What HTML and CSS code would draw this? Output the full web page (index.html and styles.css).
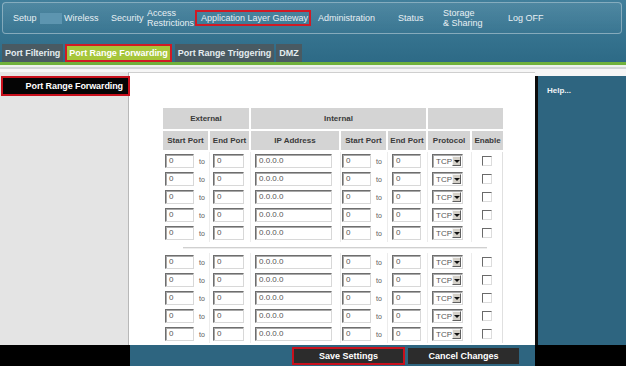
FILE: index.html
```html
<!DOCTYPE html>
<html lang="en">
<head>
    <meta charset="UTF-8">
    <title>Port Range Forwarding</title>
    <link rel="stylesheet" href="styles.css">
</head>
<body>

<header class="topbar">
    <nav class="nav">
        <a>Setup</a>
        <span class="blank"></span>
        <a>Wireless</a>
        <a>Security</a>
        <a class="two">Access<br>Restrictions</a>
        <a class="marked">Application Layer Gateway</a>
        <a>Administration</a>
        <a>Status</a>
        <a class="two">Storage<br>&amp; Sharing</a>
        <a>Log OFF</a>
    </nav>
    <div class="tabs">
        <a class="tab">Port Filtering</a>
        <a class="tab active">Port Range Forwarding</a>
        <a class="tab">Port Range Triggering</a>
        <a class="tab">DMZ</a>
    </div>
</header>
<div class="green-line"></div>
<div class="strip"></div>

<div class="page">
    <aside class="sidebar">
        <div class="side-label">Port Range Forwarding</div>
    </aside>

    <main class="content">
        <table class="fwd">
            <colgroup>
                <col class="c1"><col class="c2"><col class="c3"><col class="c4"><col class="c5"><col class="c6"><col class="c7">
            </colgroup>
            <thead>
                <tr class="h1">
                    <th colspan="2">External</th>
                    <th colspan="3">Internal</th>
                    <th colspan="2"></th>
                </tr>
                <tr class="h2">
                    <th>Start Port</th>
                    <th>End Port</th>
                    <th>IP Address</th>
                    <th>Start Port</th>
                    <th>End Port</th>
                    <th>Protocol</th>
                    <th>Enable</th>
                </tr>
            </thead>
            <tbody>
                <tr>
                    <td class="pl2"><span class="inp port">0</span><span class="to">to</span></td>
                    <td><span class="inp port2">0</span></td>
                    <td class="pl4"><span class="inp ip">0.0.0.0</span></td>
                    <td class="pl1"><span class="inp port">0</span><span class="to">to</span></td>
                    <td class="pl4"><span class="inp port">0</span></td>
                    <td class="pl4"><span class="sel">TCP<i class="arrow"></i></span></td>
                    <td class="center"><span class="chk"></span></td>
                </tr>
                <tr>
                    <td class="pl2"><span class="inp port">0</span><span class="to">to</span></td>
                    <td><span class="inp port2">0</span></td>
                    <td class="pl4"><span class="inp ip">0.0.0.0</span></td>
                    <td class="pl1"><span class="inp port">0</span><span class="to">to</span></td>
                    <td class="pl4"><span class="inp port">0</span></td>
                    <td class="pl4"><span class="sel">TCP<i class="arrow"></i></span></td>
                    <td class="center"><span class="chk"></span></td>
                </tr>
                <tr>
                    <td class="pl2"><span class="inp port">0</span><span class="to">to</span></td>
                    <td><span class="inp port2">0</span></td>
                    <td class="pl4"><span class="inp ip">0.0.0.0</span></td>
                    <td class="pl1"><span class="inp port">0</span><span class="to">to</span></td>
                    <td class="pl4"><span class="inp port">0</span></td>
                    <td class="pl4"><span class="sel">TCP<i class="arrow"></i></span></td>
                    <td class="center"><span class="chk"></span></td>
                </tr>
                <tr>
                    <td class="pl2"><span class="inp port">0</span><span class="to">to</span></td>
                    <td><span class="inp port2">0</span></td>
                    <td class="pl4"><span class="inp ip">0.0.0.0</span></td>
                    <td class="pl1"><span class="inp port">0</span><span class="to">to</span></td>
                    <td class="pl4"><span class="inp port">0</span></td>
                    <td class="pl4"><span class="sel">TCP<i class="arrow"></i></span></td>
                    <td class="center"><span class="chk"></span></td>
                </tr>
                <tr>
                    <td class="pl2"><span class="inp port">0</span><span class="to">to</span></td>
                    <td><span class="inp port2">0</span></td>
                    <td class="pl4"><span class="inp ip">0.0.0.0</span></td>
                    <td class="pl1"><span class="inp port">0</span><span class="to">to</span></td>
                    <td class="pl4"><span class="inp port">0</span></td>
                    <td class="pl4"><span class="sel">TCP<i class="arrow"></i></span></td>
                    <td class="center"><span class="chk"></span></td>
                </tr>
                <tr class="sep">
                    <td colspan="7"><div class="sep-line"></div></td>
                </tr>
                <tr>
                    <td class="pl2"><span class="inp port">0</span><span class="to">to</span></td>
                    <td><span class="inp port2">0</span></td>
                    <td class="pl4"><span class="inp ip">0.0.0.0</span></td>
                    <td class="pl1"><span class="inp port">0</span><span class="to">to</span></td>
                    <td class="pl4"><span class="inp port">0</span></td>
                    <td class="pl4"><span class="sel">TCP<i class="arrow"></i></span></td>
                    <td class="center"><span class="chk"></span></td>
                </tr>
                <tr>
                    <td class="pl2"><span class="inp port">0</span><span class="to">to</span></td>
                    <td><span class="inp port2">0</span></td>
                    <td class="pl4"><span class="inp ip">0.0.0.0</span></td>
                    <td class="pl1"><span class="inp port">0</span><span class="to">to</span></td>
                    <td class="pl4"><span class="inp port">0</span></td>
                    <td class="pl4"><span class="sel">TCP<i class="arrow"></i></span></td>
                    <td class="center"><span class="chk"></span></td>
                </tr>
                <tr>
                    <td class="pl2"><span class="inp port">0</span><span class="to">to</span></td>
                    <td><span class="inp port2">0</span></td>
                    <td class="pl4"><span class="inp ip">0.0.0.0</span></td>
                    <td class="pl1"><span class="inp port">0</span><span class="to">to</span></td>
                    <td class="pl4"><span class="inp port">0</span></td>
                    <td class="pl4"><span class="sel">TCP<i class="arrow"></i></span></td>
                    <td class="center"><span class="chk"></span></td>
                </tr>
                <tr>
                    <td class="pl2"><span class="inp port">0</span><span class="to">to</span></td>
                    <td><span class="inp port2">0</span></td>
                    <td class="pl4"><span class="inp ip">0.0.0.0</span></td>
                    <td class="pl1"><span class="inp port">0</span><span class="to">to</span></td>
                    <td class="pl4"><span class="inp port">0</span></td>
                    <td class="pl4"><span class="sel">TCP<i class="arrow"></i></span></td>
                    <td class="center"><span class="chk"></span></td>
                </tr>
                <tr>
                    <td class="pl2"><span class="inp port">0</span><span class="to">to</span></td>
                    <td><span class="inp port2">0</span></td>
                    <td class="pl4"><span class="inp ip">0.0.0.0</span></td>
                    <td class="pl1"><span class="inp port">0</span><span class="to">to</span></td>
                    <td class="pl4"><span class="inp port">0</span></td>
                    <td class="pl4"><span class="sel">TCP<i class="arrow"></i></span></td>
                    <td class="center"><span class="chk"></span></td>
                </tr>
            </tbody>
        </table>
    </main>

    <aside class="help">
        <p>Help...</p>
    </aside>
</div>

<footer class="footer">
    <div class="foot-left"></div>
    <div class="foot-main">
        <button class="btn marked-btn">Save Settings</button>
        <button class="btn">Cancel Changes</button>
    </div>
    <div class="foot-right"></div>
</footer>

</body>
</html>
```

FILE: styles.css
```css
* {
    box-sizing: border-box;
}

body {
    margin: 0;
    width: 626px;
    height: 366px;
    overflow: hidden;
    background-color: #000;
    font-family: "Liberation Sans", Arial, sans-serif;
}

/* top navigation */
.topbar {
    height: 62px;
    background: linear-gradient(#417f9b, #2d6a86);
    padding-top: 2px;
}

.nav {
    height: 32px;
    margin: 0 4px 0 2px;
    border: 1px solid rgba(255, 255, 255, 0.35);
    border-radius: 4px;
    background: linear-gradient(rgba(255, 255, 255, 0.08), rgba(255, 255, 255, 0.02));
    padding-left: 10px;
    display: grid;
    grid-template-columns: 27px 24px 47px 36px 50px 121px 80px 45px 65px auto;
    align-items: center;
    font-size: 9px;
    color: #e8f0f4;
}

.nav a {
    white-space: nowrap;
}

.nav .two {
    line-height: 10px;
}

.nav .blank {
    width: 22px;
    height: 11px;
    background-color: #5d95b0;
}

.nav .marked {
    width: 116px;
    height: 16px;
    margin-left: -2px;
    border: 2px solid #d11a24;
    line-height: 12px;
    padding-left: 4px;
}

.tabs {
    display: flex;
    gap: 2px;
    margin: 10px 0 0 2px;
    height: 18px;
}

.tab {
    height: 18px;
    line-height: 18px;
    padding: 0 3px;
    background-color: #495a62;
    color: #e4ecef;
    font-size: 9px;
    font-weight: bold;
    letter-spacing: -0.05px;
    white-space: nowrap;
}

.tab.active {
    background-color: #a6c63a;
    color: #fff;
    border: 2px solid #d11a24;
    line-height: 14px;
    padding: 0 2px;
    margin-right: 1px;
}

.green-line {
    height: 3px;
    background-color: #70b23c;
}

.strip {
    height: 7px;
    background: linear-gradient(#eef2ee 0, #eef2ee 2px, #d2d6d6 2px, #d2d6d6 4px, #f6f6f6 4px);
}

/* main area */
.page {
    display: flex;
    height: 273px;
    background-color: #f6f6f6;
}

.sidebar {
    width: 128px;
    background-color: #e4e4e4;
    padding-top: 4px;
}

.side-label {
    position: relative;
    width: 129px;
    height: 20px;
    margin-left: 1px;
    background-color: #050505;
    border: 2px solid #c8101c;
    color: #fff;
    font-size: 9px;
    font-weight: bold;
    letter-spacing: -0.1px;
    text-align: right;
    line-height: 16px;
    padding-right: 5px;
}

.content {
    width: 407px;
    background-color: #fff;
    border-left: 1px solid #b8b8b8;
    border-top: 1px solid #cfcfcf;
    padding: 35px 0 0 34px;
}

.help {
    width: 91px;
    margin-top: 4px;
    background-color: #2e6580;
    border-left: 3px solid #0c0c0c;
    padding: 10px 0 0 9px;
}

.help p {
    margin: 0;
    color: #f0f4f6;
    font-size: 8px;
    font-weight: bold;
}

/* forwarding table */
.fwd {
    width: 340px;
    table-layout: fixed;
    border-collapse: separate;
    border-spacing: 0;
    font-size: 8px;
    color: #3a3a3a;
}

.c1 { width: 47px; }
.c2 { width: 41px; }
.c3 { width: 90px; }
.c4 { width: 47px; }
.c5 { width: 40px; }
.c6 { width: 44px; }
.c7 { width: 31px; }

.fwd th {
    background-color: #d4d4d4;
    border-right: 2px solid #fff;
    border-bottom: 2px solid #fff;
    font-weight: bold;
    padding: 0;
    white-space: nowrap;
}

.fwd th:last-child {
    border-right: none;
}

.h1 th {
    height: 23px;
}

.h2 th {
    height: 21px;
}

.fwd td {
    height: 18px;
    padding: 0 0 0 3px;
    border-right: 1px solid #ececec;
    white-space: nowrap;
    vertical-align: middle;
}

.fwd td:last-child {
    border-right: 1px solid #e0e0e0;
}

.fwd td.pl1 { padding-left: 1px; }
.fwd td.pl2 { padding-left: 2px; }
.fwd td.pl4 { padding-left: 4px; }
.fwd td.center { padding-left: 0; text-align: center; }

.fwd .sep td {
    height: 11px;
    padding: 0;
}

.sep-line {
    margin: 0 15px 0 20px;
    border-top: 1px solid #d0d0d0;
    border-bottom: 1px solid #eeeeee;
}

.inp {
    display: inline-block;
    vertical-align: middle;
    height: 14px;
    border: 1px solid;
    border-color: #6e6e6e #d8d8d8 #d8d8d8 #6e6e6e;
    box-shadow: inset 1px 1px 0 #a8a8a8;
    padding-left: 3px;
    line-height: 12px;
    color: #555;
    font-size: 8px;
    background-color: #fff;
}

.port { width: 29px; }
.port2 { width: 31px; }
.ip { width: 77px; }

.to {
    display: inline-block;
    vertical-align: middle;
    margin-left: 5px;
    font-size: 7px;
    color: #5a5a5a;
}

.sel {
    display: inline-flex;
    align-items: center;
    justify-content: space-between;
    vertical-align: middle;
    width: 31px;
    height: 14px;
    border: 1px solid;
    border-color: #6e6e6e #d8d8d8 #d8d8d8 #6e6e6e;
    box-shadow: inset 1px 1px 0 #a8a8a8;
    padding: 0 1px 0 3px;
    font-size: 8px;
    color: #555;
    background-color: #fff;
}

.arrow {
    position: relative;
    width: 10px;
    height: 10px;
    background-color: #d4d0c8;
    border: 1px solid;
    border-color: #f4f4f4 #606060 #606060 #f4f4f4;
}

.arrow::after {
    content: "";
    position: absolute;
    left: 1px;
    top: 3px;
    border-left: 3px solid transparent;
    border-right: 3px solid transparent;
    border-top: 3px solid #111;
}

.chk {
    display: inline-block;
    vertical-align: middle;
    width: 10px;
    height: 10px;
    margin-left: -1px;
    border: 1px solid;
    border-color: #6a6a6a #dcdcdc #dcdcdc #6a6a6a;
    background-color: #fff;
}

/* footer buttons */
.footer {
    display: flex;
    height: 21px;
}

.foot-left {
    width: 130px;
    background-color: #000;
}

.foot-main {
    width: 405px;
    background-color: #2e6580;
    display: flex;
    align-items: flex-start;
    gap: 3px;
    padding: 3px 0 0 162px;
}

.foot-right {
    width: 91px;
    background-color: #000;
}

.btn {
    width: 111px;
    height: 16px;
    padding: 0;
    border: none;
    background-color: #2c2c2c;
    color: #fff;
    font-family: "Liberation Sans", Arial, sans-serif;
    font-size: 9px;
    font-weight: bold;
}

.marked-btn {
    height: 18px;
    margin-top: -1px;
    width: 113px;
    border: 2px solid #c8101c;
}
```
